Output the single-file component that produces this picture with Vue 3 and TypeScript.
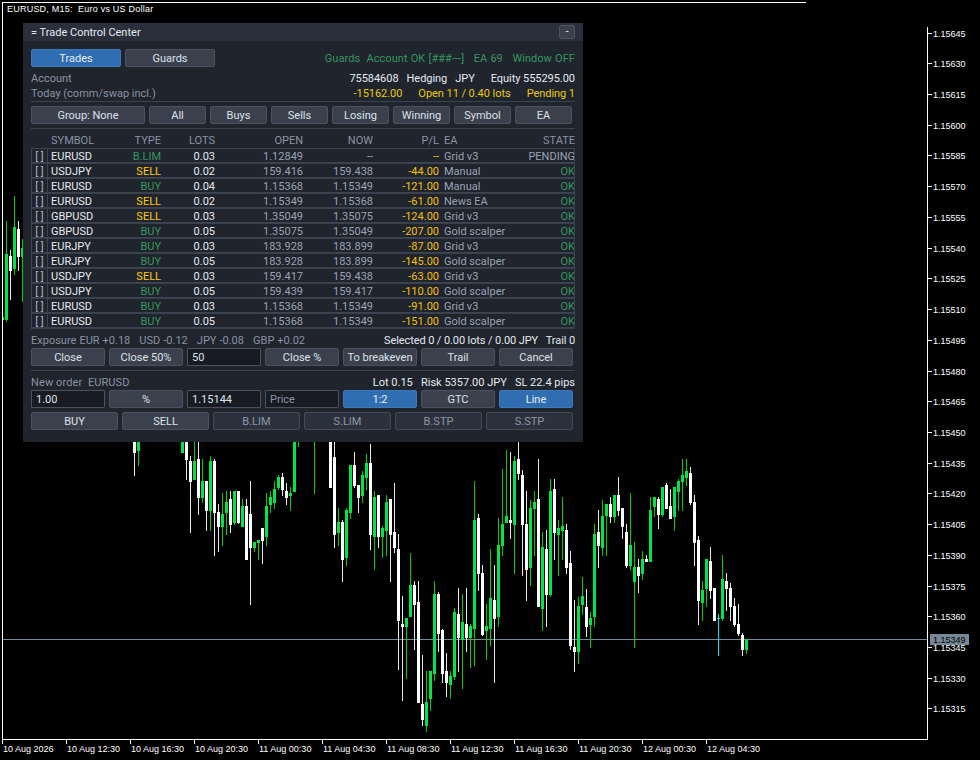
<script setup lang="ts">
type Candle = [number, number, number, number, number, 'g' | 'w']

// x, wick top, wick bottom, body top, body bottom, colour
const candles: Candle[] = [
  [6, 221, 322, 254, 320, 'g'], [10, 250, 300, 256, 271, 'w'], [14, 196, 275, 227, 269, 'g'],
  [18, 221, 271, 229, 257, 'w'], [22, 239, 302, 248, 257, 'g'],
  [134, 430, 476, 430, 453, 'w'], [138, 430, 466, 430, 451, 'g'], [182, 430, 453, 430, 453, 'g'], [186, 430, 480, 430, 460, 'w'],
  [190, 456, 533, 461, 482, 'w'], [194, 430, 480, 461, 480, 'g'], [198, 430, 515, 459, 498, 'w'], [202, 459, 503, 481, 498, 'g'],
  [206, 481, 531, 481, 511, 'w'], [210, 456, 531, 461, 511, 'g'], [214, 459, 556, 461, 513, 'w'], [218, 504, 552, 512, 527, 'w'],
  [222, 493, 546, 514, 527, 'g'], [226, 491, 535, 502, 513, 'g'], [230, 491, 533, 499, 525, 'w'], [234, 491, 525, 491, 523, 'g'],
  [238, 491, 524, 491, 523, 'w'], [242, 499, 527, 506, 527, 'g'], [246, 499, 560, 506, 560, 'w'], [250, 481, 605, 514, 548, 'w'],
  [254, 542, 552, 542, 548, 'g'], [258, 540, 560, 540, 543, 'g'], [262, 528, 564, 528, 541, 'w'], [266, 493, 546, 506, 537, 'g'],
  [270, 491, 513, 497, 505, 'g'], [274, 481, 509, 489, 503, 'g'], [278, 475, 490, 477, 488, 'g'], [282, 473, 496, 477, 490, 'w'],
  [286, 483, 505, 491, 498, 'w'], [290, 487, 511, 493, 496, 'g'], [294, 430, 492, 430, 492, 'g'], [298, 430, 447, 430, 440, 'g'],
  [314, 430, 494, 430, 440, 'g'], [330, 430, 488, 430, 488, 'w'],
  [334, 430, 548, 457, 535, 'w'], [338, 508, 546, 522, 533, 'g'], [342, 520, 582, 522, 560, 'w'], [346, 508, 566, 510, 558, 'g'],
  [350, 465, 519, 465, 513, 'g'], [354, 452, 488, 465, 486, 'w'], [358, 485, 513, 485, 498, 'w'], [362, 471, 503, 475, 496, 'g'],
  [366, 454, 490, 463, 478, 'g'], [370, 444, 550, 463, 535, 'w'], [374, 491, 570, 497, 537, 'g'], [378, 495, 548, 495, 537, 'w'],
  [382, 526, 558, 528, 537, 'g'], [386, 495, 556, 502, 531, 'g'], [390, 499, 582, 499, 535, 'w'], [394, 483, 553, 532, 548, 'w'],
  [398, 534, 670, 549, 621, 'w'], [402, 596, 701, 624, 627, 'w'], [406, 618, 679, 618, 627, 'g'], [410, 553, 617, 585, 617, 'g'],
  [414, 581, 650, 585, 605, 'w'], [418, 581, 703, 602, 703, 'w'], [422, 655, 726, 704, 720, 'w'], [426, 671, 732, 702, 726, 'g'],
  [430, 671, 711, 671, 699, 'g'], [434, 581, 681, 594, 674, 'g'], [438, 592, 652, 594, 634, 'w'], [442, 629, 683, 630, 674, 'w'],
  [446, 653, 697, 671, 683, 'w'], [450, 671, 699, 676, 685, 'g'], [454, 608, 680, 612, 677, 'g'], [458, 588, 672, 614, 638, 'w'],
  [462, 594, 689, 622, 640, 'g'], [466, 588, 652, 624, 638, 'w'], [470, 624, 668, 626, 638, 'g'], [474, 481, 666, 520, 629, 'g'],
  [478, 514, 591, 518, 574, 'w'], [482, 565, 636, 573, 635, 'w'], [486, 604, 660, 626, 631, 'g'], [490, 549, 646, 598, 629, 'g'],
  [494, 565, 683, 600, 619, 'w'], [498, 518, 627, 545, 617, 'g'], [502, 469, 556, 524, 546, 'g'], [506, 450, 523, 516, 523, 'g'],
  [510, 452, 539, 520, 523, 'w'], [514, 456, 574, 461, 525, 'g'], [518, 442, 480, 459, 474, 'w'], [522, 470, 576, 475, 525, 'w'],
  [526, 491, 601, 524, 570, 'w'], [530, 500, 586, 508, 568, 'g'], [534, 491, 556, 502, 509, 'g'], [538, 459, 607, 499, 607, 'w'],
  [542, 532, 631, 547, 609, 'g'], [546, 530, 627, 549, 595, 'w'], [550, 479, 597, 491, 595, 'g'], [554, 479, 560, 489, 533, 'w'],
  [558, 520, 576, 528, 535, 'g'], [562, 497, 560, 526, 531, 'g'], [566, 524, 574, 530, 568, 'w'], [570, 551, 650, 563, 646, 'w'],
  [574, 600, 672, 647, 652, 'w'], [578, 597, 664, 606, 652, 'g'], [582, 577, 615, 596, 605, 'g'], [586, 589, 637, 607, 627, 'w'],
  [590, 612, 648, 618, 625, 'g'], [594, 524, 627, 534, 617, 'g'], [598, 510, 568, 532, 546, 'w'], [602, 500, 556, 516, 548, 'g'],
  [606, 504, 556, 504, 516, 'g'], [610, 497, 523, 504, 517, 'w'], [614, 495, 523, 495, 517, 'g'], [618, 477, 516, 495, 511, 'w'],
  [622, 508, 539, 508, 527, 'w'], [626, 524, 568, 532, 566, 'w'], [630, 493, 570, 545, 566, 'g'], [634, 542, 648, 567, 582, 'g'],
  [638, 559, 593, 567, 576, 'w'], [642, 551, 580, 559, 574, 'g'], [646, 555, 562, 559, 562, 'w'], [650, 497, 562, 510, 562, 'g'],
  [654, 497, 517, 497, 507, 'g'], [658, 497, 529, 499, 515, 'w'], [662, 487, 517, 487, 515, 'g'], [666, 483, 509, 485, 509, 'w'],
  [670, 489, 519, 506, 519, 'w'], [674, 487, 531, 487, 517, 'g'], [678, 479, 511, 481, 492, 'g'], [682, 459, 511, 475, 482, 'g'],
  [686, 459, 486, 471, 478, 'g'], [690, 467, 505, 473, 503, 'w'], [694, 495, 566, 502, 543, 'w'], [698, 536, 625, 540, 601, 'w'],
  [702, 581, 621, 590, 603, 'g'], [706, 559, 607, 559, 589, 'g'], [710, 547, 599, 561, 591, 'w'], [714, 588, 621, 588, 621, 'w'],
  [722, 555, 621, 579, 619, 'g'], [726, 573, 611, 581, 589, 'w'], [730, 583, 621, 588, 607, 'w'], [734, 598, 627, 606, 625, 'w'],
  [738, 604, 636, 624, 634, 'w'], [742, 633, 656, 635, 650, 'w'], [746, 639, 654, 639, 650, 'g'],
]

const priceLabels = Array.from({ length: 23 }, (_, i) => ({
  text: (1.15645 - i * 0.00015).toFixed(5),
  y: Math.round(32.6 + i * 30.72),
}))

const timeLabels = [
  '10 Aug 2026', '10 Aug 12:30', '10 Aug 16:30', '10 Aug 20:30', '11 Aug 00:30', '11 Aug 04:30',
  '11 Aug 08:30', '11 Aug 12:30', '11 Aug 16:30', '11 Aug 20:30', '12 Aug 00:30', '12 Aug 04:30',
].map((text, i) => ({ text, x: 2 + i * 64 }))

const filters = ['Group: None', 'All', 'Buys', 'Sells', 'Losing', 'Winning', 'Symbol', 'EA']
const columns = ['', 'SYMBOL', 'TYPE', 'LOTS', 'OPEN', 'NOW', 'P/L', 'EA', 'STATE']

const trades = [
  { sym: 'EURUSD', type: 'B.LIM', lots: '0.03', open: '1.12849', now: '--', pl: '--', ea: 'Grid v3', state: 'PENDING' },
  { sym: 'USDJPY', type: 'SELL', lots: '0.02', open: '159.416', now: '159.438', pl: '-44.00', ea: 'Manual', state: 'OK' },
  { sym: 'EURUSD', type: 'BUY', lots: '0.04', open: '1.15368', now: '1.15349', pl: '-121.00', ea: 'Manual', state: 'OK' },
  { sym: 'EURUSD', type: 'SELL', lots: '0.02', open: '1.15349', now: '1.15368', pl: '-61.00', ea: 'News EA', state: 'OK' },
  { sym: 'GBPUSD', type: 'SELL', lots: '0.03', open: '1.35049', now: '1.35075', pl: '-124.00', ea: 'Grid v3', state: 'OK' },
  { sym: 'GBPUSD', type: 'BUY', lots: '0.05', open: '1.35075', now: '1.35049', pl: '-207.00', ea: 'Gold scalper', state: 'OK' },
  { sym: 'EURJPY', type: 'BUY', lots: '0.03', open: '183.928', now: '183.899', pl: '-87.00', ea: 'Grid v3', state: 'OK' },
  { sym: 'EURJPY', type: 'BUY', lots: '0.05', open: '183.928', now: '183.899', pl: '-145.00', ea: 'Gold scalper', state: 'OK' },
  { sym: 'USDJPY', type: 'SELL', lots: '0.03', open: '159.417', now: '159.438', pl: '-63.00', ea: 'Grid v3', state: 'OK' },
  { sym: 'USDJPY', type: 'BUY', lots: '0.05', open: '159.439', now: '159.417', pl: '-110.00', ea: 'Gold scalper', state: 'OK' },
  { sym: 'EURUSD', type: 'BUY', lots: '0.03', open: '1.15368', now: '1.15349', pl: '-91.00', ea: 'Grid v3', state: 'OK' },
  { sym: 'EURUSD', type: 'BUY', lots: '0.05', open: '1.15368', now: '1.15349', pl: '-151.00', ea: 'Gold scalper', state: 'OK' },
]

const typeClass = (type: string) => (type === 'SELL' ? 'gold' : 'green')
</script>

<template>
  <div class="terminal">
    <svg class="chart" width="980" height="760" viewBox="0 0 980 760">
      <rect x="3" y="317" width="1" height="3" fill="#00e64a" />
      <rect x="2" y="639" width="925" height="1" fill="#778899" />
      <g v-for="c in candles" :key="c[0]">
        <rect :x="c[0]" :y="c[1]" width="1" :height="c[2] - c[1]" :fill="c[5] === 'g' ? '#00d000' : '#e8e8e8'" />
        <rect :x="c[0] - 1" :y="c[3]" width="3" :height="c[4] - c[3]" :fill="c[5] === 'g' ? '#00e64a' : '#fff'" />
      </g>
      <rect x="718" y="614" width="1" height="42" fill="#00e5ff" />
      <rect x="717" y="618" width="3" height="1" fill="#00e5ff" />
      <g fill="#fff">
        <rect x="2" y="2" width="804" height="1" />
        <rect x="2" y="2" width="1" height="738" />
        <rect x="927" y="27" width="1" height="713" />
        <rect x="2" y="739" width="926" height="1" />
      </g>
      <g v-for="p in priceLabels" :key="p.text">
        <rect x="928" :y="p.y" width="4" height="1" fill="#fff" />
        <text x="933" :y="p.y + 4" class="axis">{{ p.text }}</text>
      </g>
      <g v-for="t in timeLabels" :key="t.text + t.x">
        <rect :x="t.x" y="740" width="1" height="4" fill="#fff" />
        <text :x="t.x + 1" y="752" class="axis">{{ t.text }}</text>
      </g>
      <rect x="930" y="634" width="39" height="11" fill="#778899" />
      <text x="933" y="643" class="axis tag">1.15349</text>
      <text x="7" y="12" class="axis caption">EURUSD, M15:&#160; Euro vs US Dollar</text>
    </svg>

    <section class="panel">
      <header class="titlebar">
        <span>= Trade Control Center</span>
        <button class="min">-</button>
      </header>
      <div class="content">
        <div class="tabs-row">
          <button class="btn tab active">Trades</button>
          <button class="btn tab">Guards</button>
          <div class="status green">{{ 'Guards  Account OK [###---]   EA 69   Window OFF' }}</div>
        </div>

        <div class="info-row account">
          <span class="muted">Account</span>
          <span class="tight">{{ '75584608   Hedging   JPY      Equity 555295.00' }}</span>
        </div>
        <div class="info-row today">
          <span class="muted">Today (comm/swap incl.)</span>
          <span class="gold tight">{{ '-15162.00      Open 11 / 0.40 lots      Pending 1' }}</span>
        </div>

        <div class="filters">
          <button v-for="f in filters" :key="f" class="btn">{{ f }}</button>
        </div>

        <div class="grid head">
          <span v-for="(col, i) in columns" :key="i">{{ col }}</span>
        </div>
        <div class="table">
          <div v-for="(t, i) in trades" :key="i" class="grid row">
            <span class="check">[ ]</span>
            <span class="sym">{{ t.sym }}</span>
            <span :class="typeClass(t.type)">{{ t.type }}</span>
            <span class="lots">{{ t.lots }}</span>
            <span>{{ t.open }}</span>
            <span>{{ t.now }}</span>
            <span class="pl">{{ t.pl }}</span>
            <span>{{ t.ea }}</span>
            <span :class="t.state === 'OK' ? 'green' : ''">{{ t.state }}</span>
          </div>
        </div>

        <div class="info-row exposure">
          <span class="muted spread">{{ 'Exposure EUR +0.18   USD -0.12   JPY -0.08   GBP +0.02' }}</span>
          <span class="light selected">{{ 'Selected 0 / 0.00 lots / 0.00 JPY   Trail 0' }}</span>
        </div>
        <div class="controls">
          <button class="btn">Close</button>
          <button class="btn">Close 50%</button>
          <div class="field">50</div>
          <button class="btn">Close %</button>
          <button class="btn">To breakeven</button>
          <button class="btn">Trail</button>
          <button class="btn">Cancel</button>
        </div>

        <div class="info-row order">
          <span class="muted order-title">{{ 'New order  EURUSD' }}</span>
          <span class="light">{{ 'Lot 0.15   Risk 5357.00 JPY   SL 22.4 pips' }}</span>
        </div>
        <div class="controls inputs">
          <div class="field">1.00</div>
          <button class="btn">%</button>
          <div class="field">1.15144</div>
          <div class="field placeholder">Price</div>
          <button class="btn active">1:2</button>
          <button class="btn">GTC</button>
          <button class="btn active">Line</button>
        </div>
        <div class="actions">
          <button class="btn">BUY</button>
          <button class="btn">SELL</button>
          <button class="btn off">B.LIM</button>
          <button class="btn off">S.LIM</button>
          <button class="btn off">B.STP</button>
          <button class="btn off">S.STP</button>
        </div>
      </div>
    </section>
  </div>
</template>

<style scoped>
.terminal {
  position: relative;
  width: 980px;
  height: 760px;
  overflow: hidden;
  background: #000;
  font-family: Roboto, 'Liberation Sans', sans-serif;
}

.chart {
  position: absolute;
  left: 0;
  top: 0;
  display: block;
}

.axis {
  font-family: 'Liberation Sans', sans-serif;
  font-size: 9px;
  fill: #fff;
}

.axis.tag {
  fill: #000;
}

.axis.caption {
  letter-spacing: 0.22px;
}

.panel {
  position: absolute;
  left: 23px;
  top: 23px;
  width: 560px;
  height: 419px;
  display: flex;
  flex-direction: column;
  background: #1f242d;
  color: #d5dbe5;
  font-size: 11px;
  line-height: 16px;
}

.titlebar {
  height: 18px;
  flex: none;
  display: flex;
  align-items: center;
  justify-content: space-between;
  padding: 0 8px;
  background: #2a303b;
  color: #e6eaf0;
}

.titlebar span {
  margin-top: 2px;
}

.min {
  width: 16px;
  height: 14px;
  padding: 0;
  border: 1px solid #4c5563;
  border-radius: 2px;
  background: #3a414d;
  color: #e6eaf0;
  font: inherit;
  line-height: 12px;
}

.content {
  padding: 8px 8px 0;
}

.btn {
  height: 18px;
  padding: 1px 0 0;
  border: 1px solid #4a5260;
  border-radius: 2px;
  background: #3a414d;
  color: #dde2ea;
  font: inherit;
  white-space: nowrap;
}

.btn.active {
  border-color: #3c78bc;
  background: #2f6cb0;
  color: #e8eef6;
}

.btn.off {
  border-color: #434a57;
  background: #2c323d;
  color: #8d96a5;
}

.tabs-row {
  display: flex;
  align-items: center;
  gap: 4px;
  height: 18px;
}

.tab {
  width: 90px;
}

.status {
  margin-left: auto;
  margin-top: 2px;
  white-space: pre;
  letter-spacing: 0.05px;
  word-spacing: 0.4px;
}

.green {
  color: #35975f;
}

.gold {
  color: #e8cc00;
}

.muted {
  color: #8a93a2;
}

.light {
  color: #e6eaf0;
}

.tight {
  letter-spacing: -0.05px;
}

.spread {
  word-spacing: 0.3px;
}

.selected {
  letter-spacing: -0.1px;
}

.order-title {
  letter-spacing: 0.1px;
}

.info-row {
  display: flex;
  justify-content: space-between;
  height: 14px;
  white-space: pre;
}

.account {
  margin-top: 4px;
  color: #e6eaf0;
}

.today {
  margin-top: 1px;
}

.filters {
  display: grid;
  grid-template-columns: 114px repeat(7, 57px);
  gap: 4px;
  margin-top: 1px;
  padding: 4px 0;
  border-top: 1px solid #3d4451;
  border-bottom: 1px solid #3d4451;
  width: 544px;
}

.grid {
  display: grid;
  grid-template-columns: 17px 67px 46px 54px 88px 70px 66px 86px 50px;
  width: 544px;
}

.grid > span {
  white-space: nowrap;
  text-align: right;
}

.grid > span:nth-child(2) {
  text-align: left;
  padding-left: 3px;
}

.grid > span:nth-child(8) {
  text-align: left;
  padding-left: 5px;
}

.head {
  box-sizing: border-box;
  height: 19px;
  padding-top: 4px;
  color: #8a93a2;
}

.table {
  box-sizing: border-box;
  width: 544px;
  border-top: 1px solid #3d4451;
  border-right: 1px solid #3d4451;
  overflow: hidden;
}

.row {
  height: 13px;
  line-height: 15px;
  margin-bottom: 2px;
  box-shadow: 0 1px 0 #3d4451, 0 2px 0 #3a414d;
  color: #9aa3b2;
}

.grid > .check {
  text-align: center;
  border-right: 1px solid #3d4451;
  border-left: 1px solid #3d4451;
  color: #aeb5c0;
}

.grid > .sym,
.grid > .lots {
  color: #e6eaf0;
}

.grid > .gold {
  color: #ffcc00;
}

.grid > .green {
  color: #35975f;
}

.grid > .pl {
  color: #f5c000;
}

.exposure {
  margin-top: 4px;
}

.controls {
  display: grid;
  grid-template-columns: repeat(7, 74px);
  gap: 4px;
  margin-top: 1px;
  padding-bottom: 4px;
  border-bottom: 1px solid #3d4451;
  width: 544px;
}

.controls.inputs {
  border-bottom: 0;
  padding-bottom: 0;
}

.field {
  box-sizing: border-box;
  height: 18px;
  padding-left: 4px;
  border: 1px solid #4a5260;
  border-radius: 1px;
  background: #181b22;
  color: #dde2ea;
  line-height: 18px;
}

.field.placeholder {
  color: #8a93a2;
}

.order {
  margin-top: 4px;
}

.actions {
  display: grid;
  grid-template-columns: repeat(6, 87px);
  gap: 4px;
  margin-top: 4px;
}
</style>
